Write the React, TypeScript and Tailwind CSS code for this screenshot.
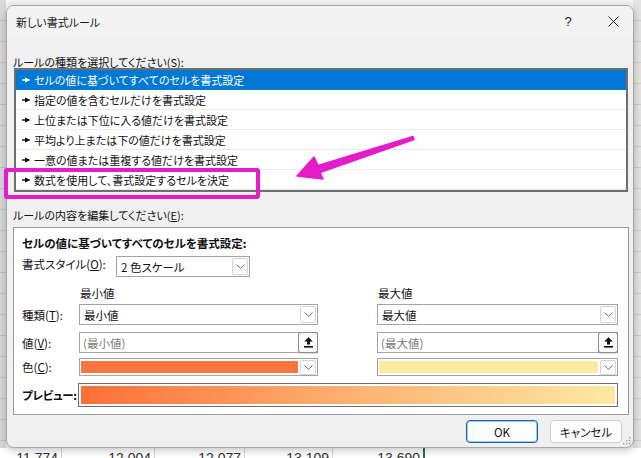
import React from "react";

const FONT = "font-['Noto_Sans_CJK_JP',sans-serif] [font-feature-settings:'palt']";

function Marker({ white }: { white?: boolean }) {
  const c = white ? "#ffffff" : "#111111";
  return (
    <svg width="9" height="6" viewBox="0 0 9 6" className="shrink-0">
      <rect x="0" y="2.3" width="4" height="1.4" fill={c} />
      <polygon points="3,0.4 8.6,3 3,5.6" fill={c} />
    </svg>
  );
}

function Chevron() {
  return (
    <svg width="9" height="5" viewBox="0 0 9 5">
      <polyline points="0.5,0.5 4.5,4.3 8.5,0.5" fill="none" stroke="#6b6b6b" strokeWidth="1" />
    </svg>
  );
}

function ChevBox({ h }: { h: string }) {
  return (
    <div className={`ml-auto mr-[1px] w-[16px] ${h} shrink-0 border border-[#d4d4d4] rounded-[2px] bg-white flex items-center justify-center`}>
      <Chevron />
    </div>
  );
}

function Dropdown({ text, w }: { text: string; w: string }) {
  return (
    <div className={`${w} h-[21px] border border-[#a3a3a3] bg-white flex items-center`}>
      <span className="pl-[4px] text-[11.5px] leading-[14px] text-[#111]">{text}</span>
      <ChevBox h="h-[17px]" />
    </div>
  );
}

function UploadIcon() {
  return (
    <svg width="9" height="11" viewBox="0 0 9 11">
      <polygon points="4.5,0.3 8.8,4.6 6,4.6 6,7.6 3,7.6 3,4.6 0.2,4.6" fill="#111" />
      <rect x="0" y="9" width="9" height="1.6" fill="#111" />
    </svg>
  );
}

function ValueInput({ text, w }: { text: string; w: string }) {
  return (
    <div className={`${w} h-[21px] border border-[#a3a3a3] bg-white flex items-center`}>
      <span className="pl-[3px] text-[11.5px] leading-[14px] text-[#7a7a7a]">{text}</span>
      <div className="ml-auto mr-[-1px] w-[20px] h-[21px] border border-[#8c8c8c] rounded-[3px] bg-[#fbfbfb] flex items-center justify-center shadow-[0_1px_1px_rgba(0,0,0,0.15)]">
        <UploadIcon />
      </div>
    </div>
  );
}

function ColorDrop({ color, w }: { color: string; w: string }) {
  return (
    <div className={`${w} h-[18px] border border-[#a3a3a3] bg-white flex items-center`}>
      <div className={`ml-[1px] h-[12px] flex-1 ${color}`} />
      <div className="ml-[2px] mr-[1px] w-[16px] h-[15px] shrink-0 border border-[#d4d4d4] rounded-[2px] bg-white flex items-center justify-center">
        <Chevron />
      </div>
    </div>
  );
}

const rules = [
  "セルの値に基づいてすべてのセルを書式設定",
  "指定の値を含むセルだけを書式設定",
  "上位または下位に入る値だけを書式設定",
  "平均より上または下の値だけを書式設定",
  "一意の値または重複する値だけを書式設定",
  "数式を使用して、書式設定するセルを決定",
];

const bgRows = Array.from({ length: 22 }, (_, i) => i);

const cells = [
  { w: "w-[62px]", t: "11,774" },
  { w: "w-[93px]", t: "12,004" },
  { w: "w-[90px]", t: "12,077" },
  { w: "w-[88px]", t: "13,109" },
  { w: "w-[92px]", t: "13,690" },
];

export default function App() {
  return (
    <div className={`relative w-[641px] h-[458px] overflow-hidden bg-[#efefef] ${FONT}`}>
      {/* spreadsheet behind */}
      <div className="flex flex-col">
        <div className="h-[448px] flex">
          <div className="w-[6px] bg-[#d9d9d9] flex flex-col">
            {bgRows.map((i) => (
              <div key={i} className="h-[21px] shrink-0 border-b border-[#c4c4c4]" />
            ))}
          </div>
          <div className="flex-1 bg-[#f4f4f4]" />
          <div className="w-[8px] bg-[#e4e4e4] flex flex-col">
            {bgRows.map((i) => (
              <div key={i} className="h-[21px] shrink-0 border-b border-[#cfcfcf]" />
            ))}
          </div>
        </div>
        <div className="h-[22px] flex bg-white text-[14px] leading-[20px] text-[#333] font-['Liberation_Sans',sans-serif]">
          {cells.map((c, i) => (
            <div
              key={i}
              className={`${c.w} shrink-0 text-right pr-[3px] ${i === 4 ? "border-r-2 border-[#217346]" : "border-r border-[#d4d4d4]"}`}
            >
              {c.t}
            </div>
          ))}
          <div className="flex-1" />
        </div>
      </div>

      {/* dialog */}
      <div className="absolute left-[6px] top-[5px] w-[628px] h-[443px] rounded-[8px] border border-[#a8a8a8] bg-[#f0f0f0] overflow-hidden flex flex-col shadow-[0_2px_8px_rgba(0,0,0,0.25)]">
        <div className="h-[30px] shrink-0 bg-[#f3f3f3] flex items-center pl-[9px] text-[11px] leading-[14px] text-[#1a1a1a]">
          <span className="mt-[2px]">新しい書式ルール</span>
          <div className="ml-auto flex items-center pr-[10px] mt-[1px]">
            <div className="w-[20px] text-center text-[13px] leading-[14px] text-[#222] font-['Liberation_Sans',sans-serif]">?</div>
            <div className="w-[20px] ml-[25px] flex justify-center">
              <svg width="11" height="11" viewBox="0 0 11 11">
                <path d="M0.5 0.5 L10.5 10.5 M10.5 0.5 L0.5 10.5" stroke="#222" strokeWidth="1" />
              </svg>
            </div>
          </div>
        </div>

        <div className="flex flex-col pl-[6px] text-[11px] text-[#111]">
          <div className="mt-[20px] h-[12px] leading-[12px]">
            ルールの種類を選択してください(<span className="underline">S</span>):
          </div>
          <div className="ml-[1px] w-[614px] h-[124px] border-2 border-[#6f6f6f] bg-white flex flex-col">
            {rules.map((r, i) => (
              <div
                key={i}
                className={`h-[20px] shrink-0 flex items-center gap-[3px] pl-[6px] leading-[14px] border-b ${
                  i === 0 ? "bg-[#0078d4] text-white border-[#0078d4]" : "text-[#111] border-[#ebebeb]"
                }`}
              >
                <Marker white={i === 0} />
                <span>{r}</span>
              </div>
            ))}
          </div>

          <div className="mt-[17px] h-[12px] leading-[12px]">
            ルールの内容を編集してください(<span className="underline">E</span>):
          </div>

          <div className="mt-[6px] w-[616px] h-[188px] border border-[#9a9a9a] bg-white flex flex-col pl-[8px]">
            <div className="mt-[8px] h-[14px] leading-[14px] font-bold text-[11.5px]">
              セルの値に基づいてすべてのセルを書式設定:
            </div>
            <div className="mt-[6px] h-[21px] flex items-start">
              <div className="w-[94px] leading-[14px] pt-[1px] text-[11.5px]">
                書式スタイル(<span className="underline">O</span>):
              </div>
              <Dropdown text="2 色スケール" w="w-[134px]" />
            </div>
            <div className="mt-[9px] h-[14px] leading-[14px] flex text-[11.5px]">
              <div className="w-[57px]" />
              <div className="w-[239px] pl-[1px]">最小値</div>
              <div className="w-[59px]" />
              <div className="pl-[1px]">最大値</div>
            </div>
            <div className="mt-[4px] h-[21px] flex items-center text-[11.5px]">
              <div className="w-[57px] leading-[14px]">
                種類(<span className="underline">T</span>):
              </div>
              <Dropdown text="最小値" w="w-[239px]" />
              <div className="w-[59px]" />
              <Dropdown text="最大値" w="w-[241px]" />
            </div>
            <div className="mt-[7px] h-[21px] flex items-center text-[11.5px]">
              <div className="w-[57px] leading-[14px]">
                値(<span className="underline">V</span>):
              </div>
              <ValueInput text="(最小値)" w="w-[239px]" />
              <div className="w-[59px]" />
              <ValueInput text="(最大値)" w="w-[241px]" />
            </div>
            <div className="mt-[5px] h-[18px] flex items-center text-[11.5px]">
              <div className="w-[57px] leading-[14px]">
                色(<span className="underline">C</span>):
              </div>
              <ColorDrop color="bg-[#fa743e]" w="w-[239px]" />
              <div className="w-[59px]" />
              <ColorDrop color="bg-[#fde9a2]" w="w-[241px]" />
            </div>
            <div className="mt-[7px] h-[24px] flex items-center">
              <div className="w-[56px] leading-[14px] font-bold whitespace-nowrap tracking-[-0.3px] text-[11.5px]">プレビュー:</div>
              <div className="w-[540px] h-[24px] shrink-0 border border-[#6e6e6e] bg-white p-[2px]">
                <div className="w-full h-full bg-[linear-gradient(to_right,#fe6f38,#fdab6c_45%,#fde9a2)]" />
              </div>
            </div>
          </div>

          <div className="mt-[5px] flex justify-end gap-[12px] pr-[11px]">
            <button className="w-[72px] h-[23px] rounded-[4px] border border-[#0a64b8] bg-[#fdfdfd] text-[11.5px] leading-[14px] text-[#111] shadow-[inset_0_0_0_1px_rgba(10,100,184,0.35)]">
              OK
            </button>
            <button className="w-[72px] h-[23px] rounded-[4px] border border-[#d0d0d0] bg-[#fdfdfd] text-[11.5px] leading-[14px] text-[#111]">
              キャンセル
            </button>
          </div>
        </div>

        <svg className="absolute right-[2px] bottom-[2px]" width="8" height="8" viewBox="0 0 8 8">
          <rect x="6" y="0" width="1.4" height="1.4" fill="#a0a0a0" />
          <rect x="3" y="3" width="1.4" height="1.4" fill="#a0a0a0" />
          <rect x="6" y="3" width="1.4" height="1.4" fill="#a0a0a0" />
          <rect x="0" y="6" width="1.4" height="1.4" fill="#a0a0a0" />
          <rect x="3" y="6" width="1.4" height="1.4" fill="#a0a0a0" />
          <rect x="6" y="6" width="1.4" height="1.4" fill="#a0a0a0" />
        </svg>
      </div>

      {/* annotation: magenta box */}
      <div className="absolute left-[4px] top-[168px] w-[256px] h-[31px] border-4 border-[#e41cc9] rounded-[3px] pointer-events-none" />
      {/* annotation: arrow */}
      <svg className="absolute left-[290px] top-[130px] pointer-events-none" width="130" height="55" viewBox="0 0 130 55">
        <polygon
          points="7,46 24,27 28,35.5 123,6.5 124,9.5 30,42.5 33,49"
          fill="#e41cc9"
          stroke="#e41cc9"
          strokeWidth="1.5"
          strokeLinejoin="round"
        />
      </svg>
    </div>
  );
}
